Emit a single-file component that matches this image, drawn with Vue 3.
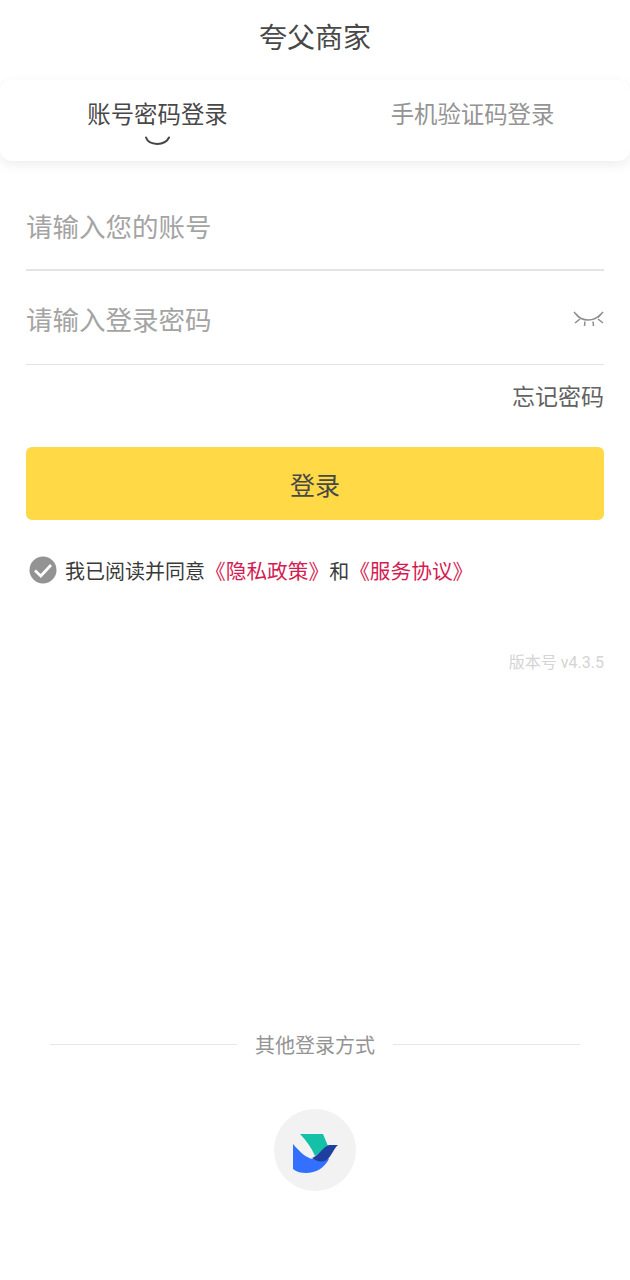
<template>
  <div class="page">
    <div class="title">夸父商家</div>

    <div class="tabs">
      <div class="tab active">
        账号密码登录
        <svg class="smile" width="28" height="10" viewBox="0 0 28 10">
          <path d="M2 1.5C5 10 21 10 25 1.5" fill="none" stroke="#444" stroke-width="2" stroke-linecap="round" />
        </svg>
      </div>
      <div class="tab">手机验证码登录</div>
    </div>

    <div class="form">
      <div class="field first">
        <span class="placeholder">请输入您的账号</span>
      </div>
      <div class="field second">
        <span class="placeholder">请输入登录密码</span>
        <svg class="eye" width="32" height="18" viewBox="0 0 32 18">
          <path
            d="M3 3C9 11 21 11 28 3M1 1L6 6.5M2 12L7 8M12 10.5L11.5 15M20 10.5L20.5 15M30 1L25 6.5M30 12L25 8"
            fill="none"
            stroke="#8c8c8c"
            stroke-width="1.5"
          />
        </svg>
      </div>
      <div class="forgot">忘记密码</div>
      <div class="login-btn">登录</div>

      <div class="agree">
        <svg class="check" width="28" height="28" viewBox="0 0 28 28">
          <circle cx="14" cy="14" r="13.5" fill="#939393" />
          <path d="M6 14.5L11.8 20L22 9" fill="none" stroke="#fff" stroke-width="2.8" />
        </svg>
        <span class="agree-text">我已阅读并同意<a>《隐私政策》</a>和<a>《服务协议》</a></span>
      </div>

      <div class="version">版本号 v4.3.5</div>
    </div>

    <div class="other">
      <div class="other-title">
        <span class="line"></span>
        <span>其他登录方式</span>
        <span class="line"></span>
      </div>
      <div class="lark">
        <svg width="82" height="82" viewBox="0 0 82 82">
          <path d="M26 25H49L54 37L41 47C37 38 32 31 26 25Z" fill="#14c0a6" />
          <path d="M19 35C26 43 32 49 39 50C44 51 50 51 55 50C50 59 42 64 32 64C27 64 23 63 19 60Z" fill="#3370ff" />
          <path d="M38 49C44 47 49 38 55 36L64 36C60 39 58 46 54 50C49 54 43 53 38 49Z" fill="#1f3f9e" />
        </svg>
      </div>
    </div>
  </div>
</template>

<script setup>
</script>

<style>
body {
  background: #fff;
}
</style>

<style scoped>
.page {
  width: 630px;
  height: 1280px;
  overflow: hidden;
  background: #fff;
  font-family: "Noto Sans CJK SC", "Noto Sans", sans-serif;
}

.title {
  height: 80px;
  padding-bottom: 8px;
  box-sizing: border-box;
  display: flex;
  align-items: center;
  justify-content: center;
  font-size: 28px;
  color: #484848;
}

.tabs {
  height: 81px;
  display: flex;
  border-radius: 12px;
  background: #fff;
  box-shadow: 0 4px 12px rgba(0, 0, 0, 0.07);
}

.tab {
  flex: 1;
  position: relative;
  padding-top: 15px;
  text-align: center;
  font-size: 23.4px;
  line-height: 36px;
  color: #949494;
}

.tab.active {
  color: #484848;
}

.smile {
  position: absolute;
  left: 144px;
  top: 56px;
}

.form {
  padding: 0 26px;
}

.field {
  display: flex;
  align-items: center;
  justify-content: space-between;
  border-bottom: 2px solid #e4e4e4;
  box-sizing: border-box;
}

.field.first {
  height: 110px;
  padding-top: 20px;
}

.field.second {
  height: 94px;
  padding-top: 2px;
  border-bottom-width: 1px;
}

.placeholder {
  font-size: 26.5px;
  color: #a4a4a4;
}

.eye {
  margin-top: 2px;
  margin-right: -1px;
}

.forgot {
  height: 82px;
  padding-top: 12px;
  box-sizing: border-box;
  text-align: right;
  font-size: 23px;
  line-height: 36px;
  color: #626262;
}

.login-btn {
  height: 73px;
  padding-top: 1px;
  box-sizing: border-box;
  display: flex;
  align-items: center;
  justify-content: center;
  border-radius: 6px;
  background: #ffd946;
  font-size: 25px;
  color: #484848;
}

.agree {
  display: flex;
  align-items: center;
  gap: 8px;
  margin-top: 36px;
  padding-left: 3px;
  height: 28px;
}

.agree-text {
  font-size: 20px;
  color: #3a3a3a;
}

.agree-text a {
  font-size: 20.7px;
  color: #d41c52;
}

.version {
  margin-top: 67px;
  text-align: right;
  font-family: Roboto, "Noto Sans CJK SC", sans-serif;
  font-size: 16px;
  line-height: 24px;
  color: #d4d4d4;
}

.other {
  margin-top: 355px;
}

.other-title {
  display: flex;
  align-items: center;
  justify-content: center;
  gap: 18px;
  padding: 0 50px;
  font-size: 20px;
  line-height: 30px;
  color: #949494;
}

.line {
  flex: 1;
  height: 1px;
  margin-top: -2px;
  background: #e6e6e6;
}

.lark {
  width: 82px;
  height: 82px;
  margin: 49px auto 0;
  border-radius: 50%;
  background: #f2f2f2;
}

.lark svg {
  display: block;
}
</style>
